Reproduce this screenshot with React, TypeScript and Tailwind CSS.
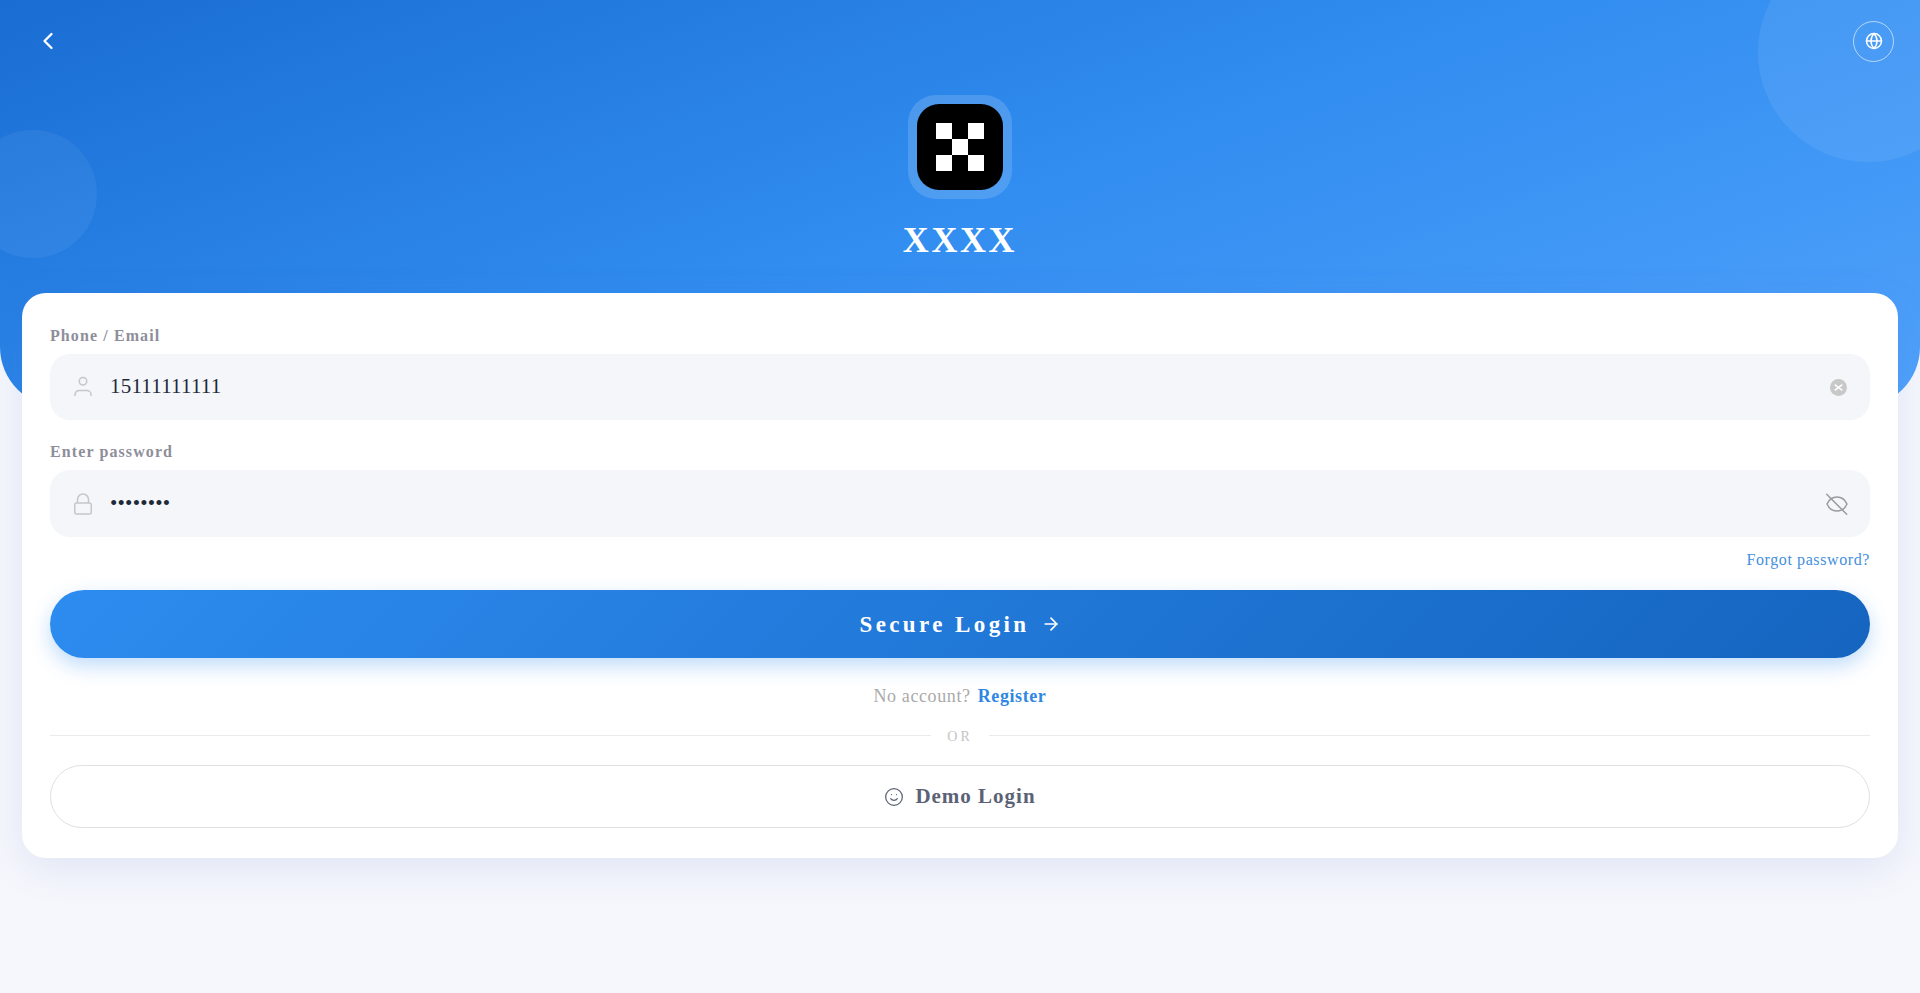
import React from 'react';
import { ArrowRight, ChevronLeft, Globe, Smile } from 'lucide-react';

const serif = 'font-["Liberation_Serif",serif]';

const UserIcon = () => (
  <svg width="22" height="22" viewBox="0 0 22 22" fill="none" stroke="#c4c6cc" strokeWidth="1.5">
    <circle cx="11" cy="5.3" r="3.75" />
    <path d="M3 20v-1.500a4 4 0 0 1 4-4h8a4 4 0 0 1 4 4V20" />
  </svg>
);

const LockIcon = () => (
  <svg width="22" height="22" viewBox="0 0 22 22" fill="none" stroke="#c4c6cc" strokeWidth="1.5">
    <rect x="2.750" y="10" width="16.500" height="11" rx="2" />
    <path d="M5.500 10V6.500a5.500 5.500 0 0 1 11 0V10" />
  </svg>
);

const EyeOffIcon = () => (
  <svg width="24" height="24" viewBox="0 0 24 24" fill="none" stroke="#9b9b9b" strokeWidth="1.500" strokeLinecap="round">
    <path d="M2 12c2-4.500 5.500-7 10-7s8 2.500 10 7c-2 4.500-5.500 7-10 7s-8-2.500-10-7Z" />
    <path d="M1.700 2.300l20 20" />
  </svg>
);

const ClearIcon = () => (
  <svg width="17" height="17" viewBox="0 0 17 17">
    <circle cx="8.500" cy="8.500" r="8.500" fill="#c8c8c8" />
    <path d="M4.700 5.700l7.600 5.600M12.300 5.700l-7.600 5.600" stroke="#fff" strokeWidth="1.500" />
  </svg>
);

const LogoMark = () => (
  <div className="grid grid-cols-3 w-[48px] h-[48px]">
    {[1, 0, 1, 0, 1, 0, 1, 0, 1].map((on, i) => (
      <div key={i} className={on ? 'bg-white' : ''} />
    ))}
  </div>
);

export default function App() {
  return (
    <div className={`min-h-screen bg-[#f5f7fc] overflow-hidden ${serif}`}>
      <header className="relative h-[407px] rounded-b-[60px] overflow-hidden bg-[linear-gradient(160deg,#1a6dd2_0%,#318df0_50%,#50a2fb_100%)]">
        <div className="absolute -left-[31px] top-[130px] w-[128px] h-[128px] rounded-full bg-white/[0.05]" />
        <div className="absolute -right-[58px] -top-[58px] w-[220px] h-[220px] rounded-full bg-white/[0.07]" />

        <div className="relative flex items-center justify-between pt-[21px] pl-[34px] pr-[26px]">
          <button className="text-white -mt-[1px]">
            <ChevronLeft className="w-7 h-7" strokeWidth={2} />
          </button>
          <button className="w-[41px] h-[41px] rounded-full border border-white/60 flex items-center justify-center text-white">
            <Globe className="w-[18px] h-[18px] -mt-[1px]" strokeWidth={2} />
          </button>
        </div>

        <div className="relative flex flex-col items-center mt-[33px]">
          <div className="p-[9px] rounded-[28px] bg-white/[0.15]">
            <div className="w-[86px] h-[86px] rounded-[22px] bg-black flex items-center justify-center">
              <LogoMark />
            </div>
          </div>
          <h1 className="mt-[20px] text-4xl font-bold tracking-[2.6px] text-white leading-[42px]">XXXX</h1>
        </div>
      </header>

      <main className="relative mx-[22px] -mt-[114px] bg-white rounded-3xl px-[28px] pt-[31px] pb-[30px] shadow-[0_10px_40px_rgba(70,100,190,0.12)]">
        <label className="block text-base font-bold tracking-[1.1px] text-[#8e8e9a] mb-[6px]">Phone / Email</label>
        <div className="h-[66px] rounded-[20px] bg-[#f4f6fa] flex items-center pl-[22px] pr-[23px]">
          <UserIcon />
          <input
            readOnly
            value="15111111111"
            className="flex-1 ml-[16px] -mt-[1px] bg-transparent outline-none text-[21px] tracking-[0.2px] text-[#1f2937]"
          />
          <ClearIcon />
        </div>

        <label className="block mt-[20px] text-base font-bold tracking-[1.1px] text-[#8e8e9a] mb-[6px]">Enter password</label>
        <div className="h-[67px] rounded-[20px] bg-[#f4f6fa] flex items-center pl-[22px] pr-[21px]">
          <LockIcon />
          <input
            readOnly
            type="password"
            value="11111111"
            className="flex-1 ml-[16px] bg-transparent outline-none text-[21px] tracking-[0.2px] text-[#1f2937]"
          />
          <EyeOffIcon />
        </div>

        <div className="flex justify-end mt-[11px]">
          <a className="text-base tracking-[0.6px] text-[#4490de] leading-[24px]">Forgot password?</a>
        </div>

        <button className="mt-[18px] w-full h-[68px] rounded-full bg-[linear-gradient(135deg,#2d8cf0,#1565c0)] text-white flex items-center justify-center gap-[11px] shadow-[0_8px_20px_rgba(45,140,240,0.3)]">
          <span className="pt-[2px] text-[23px] font-bold tracking-[3.4px]">Secure Login</span>
          <ArrowRight className="w-5 h-5" strokeWidth={2} />
        </button>

        <p className="mt-[26px] text-center text-lg tracking-[0.6px] text-[#aaaaaa] leading-[24px]">
          No account? <a className="ml-[2px] font-bold text-[#2f87e2]">Register</a>
        </p>

        <div className="mt-[15px] flex items-center gap-[16px] text-[#c4c4c4]">
          <div className="flex-1 h-px bg-[#ebebef]" />
          <span className="pt-[4px] text-sm tracking-[3px] leading-[20px]">OR</span>
          <div className="flex-1 h-px bg-[#ebebef]" />
        </div>

        <button className="mt-[18px] w-full h-[63px] rounded-full border border-[#e0e0e4] bg-white flex items-center justify-center gap-[11px] text-[#5b6275]">
          <Smile className="w-5 h-5" strokeWidth={1.5} />
          <span className="text-[21px] font-bold tracking-[1px]">Demo Login</span>
        </button>
      </main>
    </div>
  );
}
